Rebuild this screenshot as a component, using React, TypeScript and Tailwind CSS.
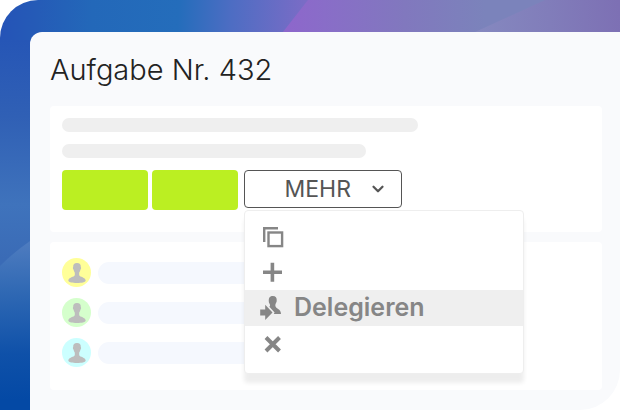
import React from "react";
import { ChevronDown } from "lucide-react";
import clsx from "clsx";

const people = [
  { name: "Person 1", color: "bg-[#ffff99]" },
  { name: "Person 2", color: "bg-[#d5ffcc]" },
  { name: "Person 3", color: "bg-[#ccffff]" },
];

const Backdrop = () => (
  <svg
    className="absolute inset-0 h-full w-full"
    viewBox="0 0 620 410"
    preserveAspectRatio="none"
    aria-hidden="true"
  >
    <defs>
      <linearGradient id="top" gradientUnits="userSpaceOnUse" x1="0" y1="0" x2="308" y2="16">
        <stop offset="0" stopColor="#2553b7" />
        <stop offset="0.12" stopColor="#255bb7" />
        <stop offset="0.3" stopColor="#2368b9" />
        <stop offset="0.58" stopColor="#246dbb" />
        <stop offset="0.75" stopColor="#4d6dc3" />
        <stop offset="1" stopColor="#7c6cc6" />
      </linearGradient>
      <linearGradient id="purple" gradientUnits="userSpaceOnUse" x1="290" y1="0" x2="520" y2="0">
        <stop offset="0" stopColor="#8d67cb" />
        <stop offset="0.15" stopColor="#896dc8" />
        <stop offset="0.5" stopColor="#8178be" />
        <stop offset="0.85" stopColor="#7b83bb" />
        <stop offset="1" stopColor="#7b83bb" />
      </linearGradient>
      <linearGradient id="right" gradientUnits="userSpaceOnUse" x1="480" y1="32" x2="620" y2="16">
        <stop offset="0" stopColor="#8588bf" />
        <stop offset="0.5" stopColor="#817dba" />
        <stop offset="1" stopColor="#7d70b4" />
      </linearGradient>
      <linearGradient id="side" gradientUnits="userSpaceOnUse" x1="0" y1="40" x2="0" y2="260">
        <stop offset="0" stopColor="#2656b6" />
        <stop offset="0.35" stopColor="#3060b5" />
        <stop offset="0.75" stopColor="#3f73bc" />
        <stop offset="1" stopColor="#3a6bb6" />
      </linearGradient>
      <linearGradient id="bottom" gradientUnits="userSpaceOnUse" x1="0" y1="245" x2="4" y2="400">
        <stop offset="0" stopColor="#4d7bbf" />
        <stop offset="0.3" stopColor="#3069b4" />
        <stop offset="0.7" stopColor="#0f51a9" />
        <stop offset="1" stopColor="#0449a5" />
      </linearGradient>
    </defs>
    <rect width="320" height="60" fill="url(#top)" />
    <rect y="40" width="60" height="370" fill="url(#side)" />
    <path d="M0 266Q14 252 30 241L60 222V410H0Z" fill="url(#bottom)" />
    <path d="M308 0H620V60H261Z" fill="url(#purple)" />
    <path d="M545 0H620V60H413L475 32Z" fill="url(#right)" />
  </svg>
);

const PersonIcon = () => (
  <svg className="h-5 w-[18px] fill-[#bdbdbd]" viewBox="0 0 18 20" aria-hidden="true">
    <path d="M9 0C11.7 0 13 1.5 12.8 4C13.3 4.3 13.2 6 12.4 6.7C12.1 8.2 11.5 9 11.2 9.6V12.2C11.8 14 17.5 14.3 17.7 17.5C17.6 19.3 13.5 20 9 20C4.5 20 .4 19.3 .3 17.5C.5 14.3 6.2 14 6.8 12.2V9.6C6.5 9 5.9 8.2 5.6 6.7C4.8 6 4.7 4.3 5.2 4C5 1.5 6.3 0 9 0Z" />
  </svg>
);

const CopyIcon = () => (
  <svg className="h-6 w-6" viewBox="0 0 24 24" fill="none" stroke="#868686" strokeWidth="2.4" aria-hidden="true">
    <path d="M4.2 18V4.2H18" />
    <rect x="8.5" y="8.5" width="13.6" height="13.6" />
  </svg>
);

const PlusIcon = () => (
  <svg className="h-6 w-6" viewBox="0 0 24 24" fill="none" stroke="#868686" strokeWidth="3.6" aria-hidden="true">
    <path d="M12.4 2.8V21.8M3 12.3H22" />
  </svg>
);

const DelegateIcon = () => (
  <svg className="h-6 w-6 fill-[#868686]" viewBox="0 0 24 24" aria-hidden="true">
    <path d="M.2 13.6H5.2V8.8L12.5 16.6L5.2 24V19.6H.2Z" />
    <path d="M12.8 0C15.7 0 17 1.7 16.7 4.6C17 6.2 15.3 7.6 15.3 9.3C15.3 13.5 21 12.3 21 18.1H13.8L14.6 16.6L9.4 10.8C10.8 9.4 9.7 8 9 6.7C8.2 2.7 9.4 0 12.8 0Z" />
  </svg>
);

const CloseIcon = () => (
  <svg className="h-6 w-6" viewBox="0 0 24 24" fill="none" stroke="#868686" strokeWidth="4" aria-hidden="true">
    <path d="M6 5.5L19.5 19M19.5 5.5L6 19" />
  </svg>
);

const actions = [
  { id: "copy", name: "Kopieren", icon: <CopyIcon /> },
  { id: "add", name: "Hinzufügen", icon: <PlusIcon /> },
  { id: "delegate", name: "Delegieren", label: "Delegieren", icon: <DelegateIcon />, active: true },
  { id: "close", name: "Schließen", icon: <CloseIcon /> },
];

const ActionMenu = () => (
  <div
    role="menu"
    className="absolute left-0 top-10 z-10 w-70 rounded-sm border border-[#eeeeee] bg-white pb-[11px] pt-[7px] shadow-[0_9px_4px_rgba(0,0,0,0.07)]"
  >
    {actions.map((action) => (
      <button
        key={action.id}
        type="button"
        role="menuitem"
        aria-label={action.name}
        className={clsx(
          "flex h-9 w-full items-center gap-2.5 pl-[15px] text-left text-[25px] font-semibold text-[#868686]",
          action.active && "bg-[#efefef]"
        )}
      >
        {action.icon}
        {action.label}
      </button>
    ))}
  </div>
);

export default function App() {
  return (
    <div className="min-h-screen bg-white font-['Inter',sans-serif]">
      <div className="relative flex min-h-screen overflow-hidden rounded-tl-[38px] pl-[30px] pt-8">
        <Backdrop />
        <main className="relative flex-1 rounded-br-[40px] rounded-tl-xl bg-[#f9fafc] pb-5 pl-5 pr-[18px] pt-5">
          <h1 className="mb-[18px] text-[29px] font-light leading-9 text-[#222222]">Aufgabe Nr. 432</h1>

          <section className="mb-2.5 rounded bg-white px-3 pb-[22px] pt-3">
            <div className="mb-3 h-3.5 w-[356px] max-w-full rounded-full bg-[#efefef]" />
            <div className="mb-3 h-3.5 w-76 max-w-full rounded-full bg-[#efefef]" />
            <div className="flex items-start">
              <button type="button" aria-label="Annehmen" className="mr-1 h-10 w-[86px] rounded bg-[#bbef22]" />
              <button type="button" aria-label="Ablehnen" className="mr-1.5 h-10 w-[86px] rounded bg-[#bbef22]" />
              <div className="relative">
                <button
                  type="button"
                  aria-haspopup="menu"
                  aria-expanded="true"
                  className="flex h-[38px] w-[158px] items-center justify-end gap-[18px] rounded border border-[#555555] pr-3.5 text-[23px] text-[#555555]"
                >
                  MEHR
                  <ChevronDown className="h-[18px] w-[18px]" strokeWidth={3} />
                </button>
                <ActionMenu />
              </div>
            </div>
          </section>

          <section className="flex flex-col gap-[11px] rounded bg-white px-3 pb-[23px] pt-4">
            {people.map((person) => (
              <div key={person.name} className="flex items-center gap-[7px]">
                <span className={clsx("flex h-[29px] w-[29px] items-center justify-center rounded-full", person.color)}>
                  <PersonIcon />
                </span>
                <span className="h-[22px] w-60 rounded-full bg-[#f5f8fe]" />
              </div>
            ))}
          </section>
        </main>
      </div>
    </div>
  );
}
